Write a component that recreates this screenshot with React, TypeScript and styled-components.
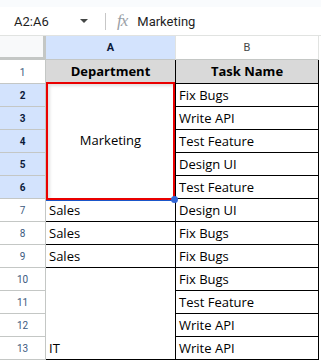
import React from 'react';
import styled, { createGlobalStyle } from 'styled-components';

const GlobalStyle = createGlobalStyle`
  body {
    margin: 0;
    background: #ffffff;
    font-family: 'Open Sans', 'Noto Sans', sans-serif;
  }
`;

const Page = styled.div`
  width: 321px;
  height: 361px;
  overflow: hidden;
  background: #ffffff;
`;

const TopBand = styled.div`
  height: 7px;
  background: #f9fbfd;
`;

const FormulaBar = styled.div`
  display: flex;
  align-items: center;
  height: 28px;
  border-bottom: 1px solid #e1e3e1;
  font-family: Roboto, 'Liberation Sans', sans-serif;
  font-size: 13px;
  color: #1f1f1f;
`;

const NameBox = styled.div`
  display: flex;
  align-items: center;
  width: 92px;
  padding: 0 4px 0 14px;
  box-sizing: border-box;
  justify-content: space-between;
`;

const Caret = styled.span`
  width: 0;
  height: 0;
  border-left: 4px solid transparent;
  border-right: 4px solid transparent;
  border-top: 4px solid #444746;
`;

const Divider = styled.span`
  width: 1px;
  height: 17px;
  background: #c7c7c7;
  margin: 0 11px 0 13px;
`;

const Fx = styled.span`
  font-family: 'Liberation Serif', serif;
  font-style: italic;
  color: #9aa0a6;
  font-size: 17px;
  letter-spacing: -1px;
  margin-right: 10px;
`;

const Sheet = styled.div`
  position: relative;
  display: grid;
  grid-template-columns: 46px 130px 143px;
  grid-template-rows: 24px 24px repeat(12, 23px);
`;

const Corner = styled.div`
  background: #f8f9fa;
  border-right: 3px solid #c4c7c5;
  border-bottom: 3px solid #c4c7c5;
  box-sizing: border-box;
`;

const ColHead = styled.div<{ $active?: boolean }>`
  display: flex;
  align-items: center;
  justify-content: center;
  box-sizing: border-box;
  background: ${(p) => (p.$active ? '#d3e3fd' : '#ffffff')};
  border-right: 1px solid #e1e3e1;
  border-bottom: 1px solid #c4c7c5;
  font-family: Roboto, 'Liberation Sans', sans-serif;
  font-size: 11px;
  font-weight: ${(p) => (p.$active ? 700 : 400)};
  color: ${(p) => (p.$active ? '#0b1a3a' : '#444746')};
`;

const RowHead = styled.div<{ $active?: boolean; $row: number }>`
  grid-column: 1;
  grid-row: ${(p) => p.$row + 1};
  display: flex;
  align-items: center;
  justify-content: center;
  box-sizing: border-box;
  background: ${(p) => (p.$active ? '#d3e3fd' : '#ffffff')};
  border-right: 1px solid #c4c7c5;
  border-bottom: 1px solid #c4c7c5;
  font-family: Roboto, 'Liberation Sans', sans-serif;
  font-size: 10px;
  font-weight: ${(p) => (p.$active ? 700 : 400)};
  color: ${(p) => (p.$active ? '#0b1a3a' : '#3c5a80')};
  padding-top: 1px;
`;

const Cell = styled.div<{
  $head?: boolean;
  $col: number;
  $row: number;
  $span?: number;
  $center?: boolean;
}>`
  grid-column: ${(p) => p.$col};
  grid-row: ${(p) => `${p.$row + 1} / span ${p.$span ?? 1}`};
  display: flex;
  box-sizing: border-box;
  align-items: ${(p) => (p.$center || p.$head ? 'center' : 'flex-end')};
  justify-content: ${(p) => (p.$head || p.$center ? 'center' : 'flex-start')};
  padding: 0 3px 2px;
  background: ${(p) => (p.$head ? '#d9d9d9' : '#ffffff')};
  border-right: 1px solid #000000;
  border-bottom: 1px solid #000000;
  font-size: 13px;
  font-weight: ${(p) => (p.$head ? 700 : 400)};
  color: #000000;
  white-space: nowrap;
  line-height: 18px;
`;

const Selection = styled.div`
  position: absolute;
  left: 46px;
  top: 46px;
  width: 129px;
  height: 118px;
  box-sizing: border-box;
  border: 2px solid #ea0000;
  box-shadow: inset 2px 2px 3px rgba(0, 0, 0, 0.12), 0 1px 0 #1a56c9;
  pointer-events: none;
`;

const Handle = styled.span`
  position: absolute;
  right: -5px;
  bottom: -5px;
  width: 7px;
  height: 7px;
  border-radius: 50%;
  background: #3367d6;
`;

const tasks = [
  'Fix Bugs',
  'Write API',
  'Test Feature',
  'Design UI',
  'Test Feature',
  'Design UI',
  'Fix Bugs',
  'Fix Bugs',
  'Fix Bugs',
  'Test Feature',
  'Write API',
  'Write API',
];

const deptCell = (row: number) => {
  if (row === 2)
    return (
      <Cell $col={2} $row={row} $span={5} $center>
        Marketing
      </Cell>
    );
  if (row >= 7 && row <= 9)
    return (
      <Cell $col={2} $row={row}>
        Sales
      </Cell>
    );
  if (row === 10)
    return (
      <Cell $col={2} $row={row} $span={4}>
        IT
      </Cell>
    );
  return null;
};

export default function App() {
  return (
    <Page>
      <GlobalStyle />
      <TopBand />
      <FormulaBar>
        <NameBox>
          <span>A2:A6</span>
          <Caret />
        </NameBox>
        <Divider />
        <Fx>fx</Fx>
        <span>Marketing</span>
      </FormulaBar>
      <Sheet>
        <Corner />
        <ColHead $active>A</ColHead>
        <ColHead>B</ColHead>

        <RowHead $row={1}>1</RowHead>
        <Cell $head $col={2} $row={1}>
          Department
        </Cell>
        <Cell $head $col={3} $row={1}>
          Task Name
        </Cell>

        {tasks.map((task, i) => {
          const row = i + 2;
          return (
            <React.Fragment key={row}>
              <RowHead $row={row} $active={row >= 2 && row <= 6}>
                {row}
              </RowHead>
              {deptCell(row)}
              <Cell $col={3} $row={row}>
                {task}
              </Cell>
            </React.Fragment>
          );
        })}
        <Selection>
          <Handle />
        </Selection>
      </Sheet>
    </Page>
  );
}
